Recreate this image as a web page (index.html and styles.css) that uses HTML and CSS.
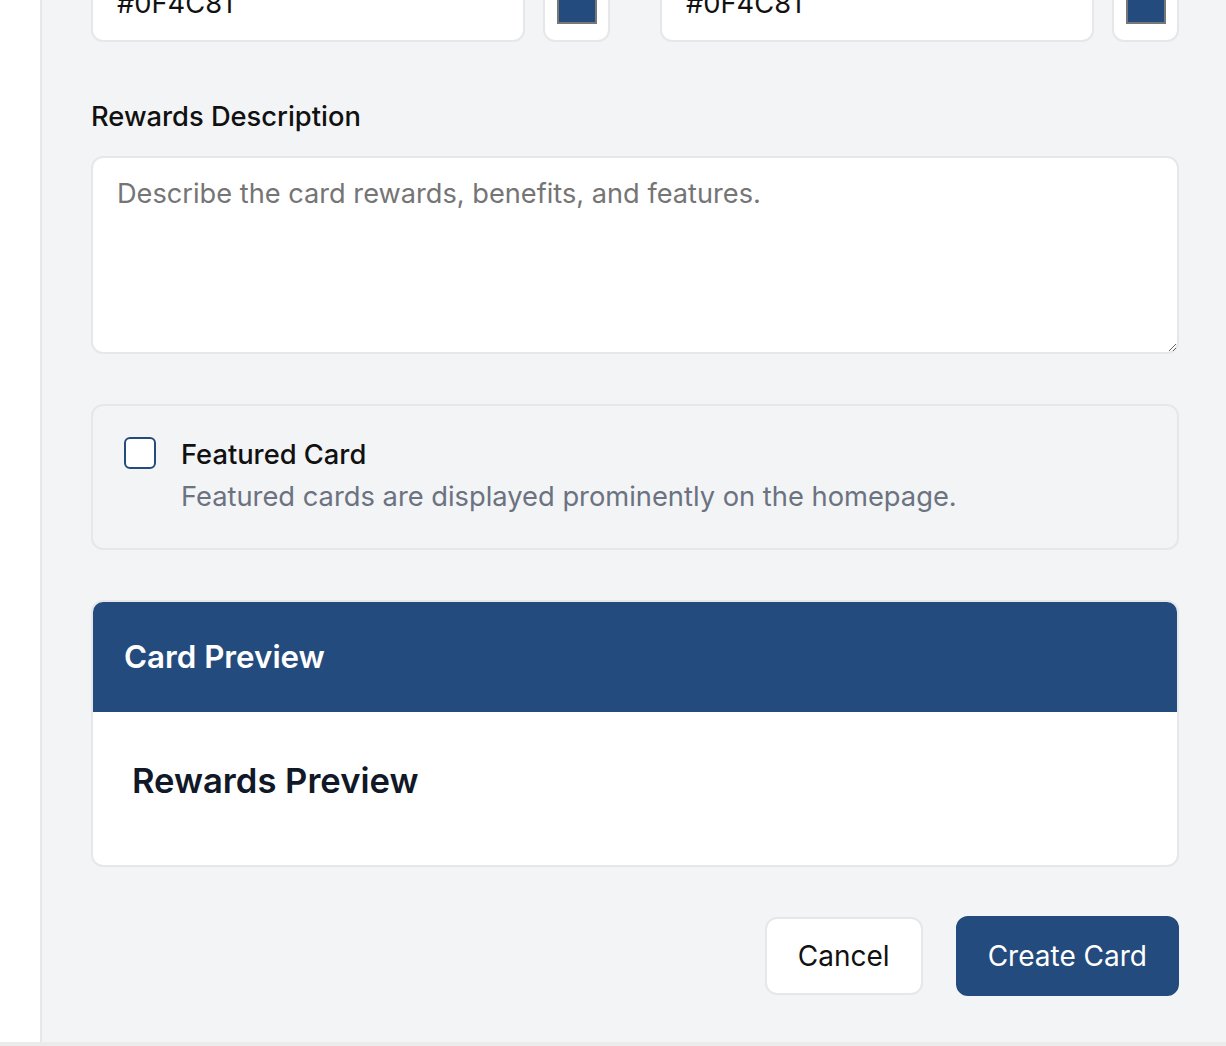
FILE: index.html
```html
<!DOCTYPE html>
<html lang="en">
<head>
<meta charset="utf-8">
<title>Create Card</title>
<link rel="stylesheet" href="styles.css">
</head>
<body>
<div class="layout">
  <aside class="sidebar"></aside>
  <main class="main">
    <div class="color-row">
      <div class="color-field">
        <input class="text-input" type="text" value="#0F4C81">
        <div class="swatch-box"><span class="swatch"></span></div>
      </div>
      <div class="color-field">
        <input class="text-input" type="text" value="#0F4C81">
        <div class="swatch-box"><span class="swatch"></span></div>
      </div>
    </div>

    <label class="field-label" for="rewards">Rewards Description</label>
    <textarea id="rewards" class="textarea" placeholder="Describe the card rewards, benefits, and features."></textarea>

    <div class="featured">
      <span class="checkbox"></span>
      <div class="featured-text">
        <div class="featured-title">Featured Card</div>
        <div class="featured-desc">Featured cards are displayed prominently on the homepage.</div>
      </div>
    </div>

    <section class="preview">
      <div class="preview-header">Card Preview</div>
      <div class="preview-body">
        <h3 class="preview-title">Rewards Preview</h3>
      </div>
    </section>

    <div class="actions">
      <button class="btn btn-cancel" type="button">Cancel</button>
      <button class="btn btn-primary" type="button">Create Card</button>
    </div>
  </main>
</div>
<div class="bottom-bar"></div>
</body>
</html>
```

FILE: styles.css
```css
* { box-sizing: border-box; }

html, body {
  margin: 0;
  padding: 0;
  height: 1046px;
  overflow: hidden;
  background: #f3f4f6;
  font-family: Inter, "Noto Sans", "Liberation Sans", sans-serif;
  color: #111111;
}

.layout {
  display: flex;
  height: 1042px;
  overflow: hidden;
}

.sidebar {
  width: 42px;
  flex: none;
  background: #ffffff;
  border-right: 2px solid #e5e7eb;
}

.main {
  flex: 1;
  min-width: 0;
  padding: 0 47px 0 49px;
  display: flex;
  flex-direction: column;
}

.color-row {
  margin-top: -36px;
  display: grid;
  grid-template-columns: minmax(0, 1fr) minmax(0, 1fr);
  column-gap: 50px;
}

.color-field {
  display: flex;
  gap: 18px;
  min-width: 0;
}

.text-input {
  flex: 1;
  min-width: 0;
  width: 0;
  height: 78px;
  border: 2px solid #e5e7eb;
  border-radius: 12px;
  background: #fff;
  padding: 0 24px;
  font-family: inherit;
  font-size: 27.3px;
  color: #111;
}

.swatch-box {
  width: 67px;
  height: 78px;
  flex: none;
  border: 2px solid #e5e7eb;
  border-radius: 12px;
  background: #fff;
  display: flex;
  align-items: center;
  justify-content: center;
}

.swatch {
  width: 40px;
  height: 40px;
  background: #244b7d;
  border: 2px solid #777777;
  margin-top: 2px;
}

.field-label {
  display: block;
  margin-top: 57px;
  font-size: 27.3px;
  line-height: 36px;
  font-weight: 500;
  color: #111;
}

.textarea {
  margin-top: 21px;
  width: 100%;
  height: 198px;
  border: 2px solid #e5e7eb;
  border-radius: 12px;
  background: #fff;
  padding: 18px 24px;
  font-family: inherit;
  font-size: 27.2px;
  line-height: 36px;
  resize: vertical;
  display: block;
}

.textarea::placeholder { color: #757575; }

.featured {
  margin-top: 50px;
  border: 2px solid #e5e7eb;
  border-radius: 12px;
  background: #f3f4f6;
  padding: 31px 31px 33px;
  display: flex;
  gap: 25px;
}

.checkbox {
  width: 32px;
  height: 32px;
  flex: none;
  border: 2px solid #244b7d;
  border-radius: 6px;
  background: #fff;
}

.featured-title {
  font-size: 27.3px;
  line-height: 36px;
  font-weight: 500;
  color: #111;
}

.featured-desc {
  margin-top: 6px;
  font-size: 27.3px;
  line-height: 36px;
  color: #6b7280;
}

.preview {
  margin-top: 50px;
  border: 2px solid #e5e7eb;
  border-radius: 12px;
  background: #fff;
  overflow: hidden;
}

.preview-header {
  background: #244b7d;
  color: #fff;
  font-size: 31.3px;
  font-weight: 600;
  line-height: 36px;
  padding: 37px 31px;
}

.preview-body {
  padding: 46px 39px 63px;
}

.preview-title {
  margin: 0;
  font-size: 34.6px;
  line-height: 44px;
  font-weight: 600;
  color: #111827;
}

.actions {
  margin-top: 49px;
  display: flex;
  justify-content: flex-end;
  align-items: center;
  gap: 33px;
}

.btn {
  font-family: inherit;
  font-size: 28px;
  border-radius: 12px;
  cursor: pointer;
}

.btn-cancel {
  height: 78px;
  padding: 0 31px;
  background: #fff;
  border: 2px solid #e5e7eb;
  color: #111;
}

.btn-primary {
  height: 80px;
  padding: 0 30px;
  background: #244b7d;
  border: 2px solid #244b7d;
  color: #fff;
}

.bottom-bar {
  height: 4px;
  background: #ebebeb;
}
```
